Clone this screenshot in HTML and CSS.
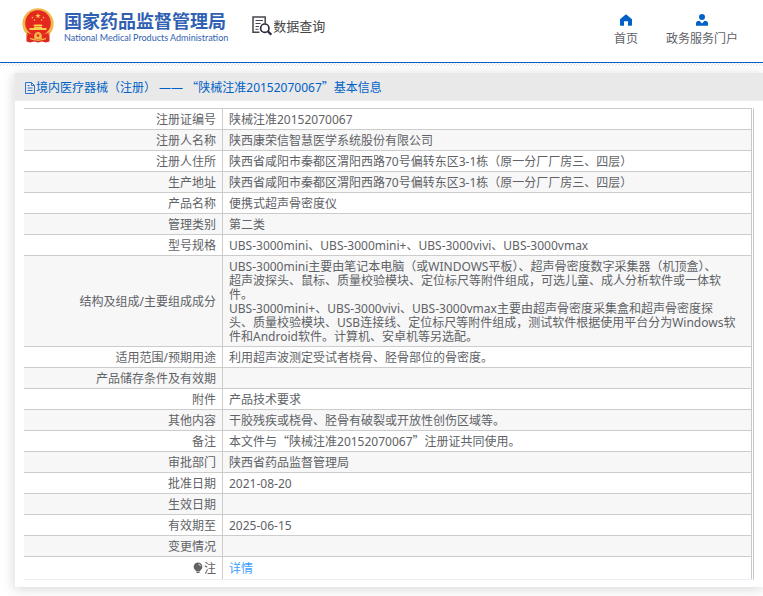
FILE: index.html
```html
<!DOCTYPE html>
<html lang="zh-CN">

<head>
    <meta charset="UTF-8">
    <meta name="viewport" content="width=device-width, initial-scale=1.0">
    <title>国家药品监督管理局 数据查询</title>
    <link rel="stylesheet" href="styles.css">
</head>

<body>
    <header class="header">
        <a class="logo" href="#">
            <svg class="emblem" viewBox="0 0 32 35" aria-hidden="true">
                <path d="M4.5 24 L4.5 33.5 L8 34.5 L12 33.5 L16 34.5 L20 33.5 L24 34.5 L27.5 33.5 L27.5 24 Z" fill="#dd2a20" />
                <circle cx="16" cy="15.8" r="15.6" fill="#f0b84c" />
                <circle cx="16" cy="15" r="12.8" fill="#e5281e" />
                <path d="M16 5 L16.7 7 H18.8 L17.1 8.3 L17.7 10.3 L16 9.1 L14.3 10.3 L14.9 8.3 L13.2 7 H15.3 Z" fill="#f6cf4f" />
                <g fill="#f6cf4f">
                    <circle cx="10.5" cy="9.5" r="0.8" />
                    <circle cx="12.4" cy="12" r="0.8" />
                    <circle cx="19.6" cy="12" r="0.8" />
                    <circle cx="21.5" cy="9.5" r="0.8" />
                    <path d="M11 18 L12.5 16.6 H19.5 L21 18 Z M12 18.6 H20 V20 H24.5 V22 H7.5 V20 H12 Z" />
                </g>
                <path d="M5 24.5 Q10 27 12.5 26.5 L12 31 L6 29 Z M27 24.5 Q22 27 19.5 26.5 L20 31 L26 29 Z" fill="#e5281e" />
                <circle cx="16" cy="27.5" r="3.6" fill="#f0b84c" />
                <circle cx="16" cy="27.5" r="1.3" fill="#e5281e" />
                <path d="M8 30.5 Q16 34 24 30.5" fill="none" stroke="#f6cf4f" stroke-width="1.2" />
            </svg>
            <span class="logo-text">
                <span class="logo-cn">国家药品监督管理局</span>
                <span class="logo-en">National Medical Products Administration</span>
            </span>
        </a>
        <a class="search-title" href="#">
            <svg class="search-icon" viewBox="0 0 20 20" aria-hidden="true">
                <path d="M7.5 16.2 H1 V1 H13.2 V7.5" fill="none" stroke="#45454f" stroke-width="1.5" />
                <path d="M3.5 4.5 H11 M3.5 7.5 H8.5 M3.5 10.5 H7 M3.5 13.2 H6.5" stroke="#45454f" stroke-width="1.1" />
                <circle cx="12.8" cy="12.2" r="4.2" fill="none" stroke="#2b2b40" stroke-width="1.7" />
                <path d="M15.8 15.2 L19.3 18.6" stroke="#2b2b40" stroke-width="2.2" />
            </svg>
            <span>数据查询</span>
        </a>
        <nav class="nav">
            <a href="#">
                <svg class="nav-icon" viewBox="0 0 12 12" aria-hidden="true">
                    <path d="M6 0.3 L12 5.2 V11 Q12 11.7 11.3 11.7 H8 V7.2 H4 V11.7 H0.7 Q0 11.7 0 11 V5.2 Z" fill="#0061c6" />
                </svg>
                <span>首页</span>
            </a>
            <a href="#">
                <svg class="nav-icon" viewBox="0 0 12 12" aria-hidden="true">
                    <circle cx="6" cy="3" r="3" fill="#0061c6" />
                    <path d="M0 11.8 V9.5 Q0 6.8 3.5 6.8 L6 9.5 L8.5 6.8 Q12 6.8 12 9.5 V11.8 Z" fill="#0061c6" />
                </svg>
                <span>政务服务门户</span>
            </a>
        </nav>
    </header>
    <div class="stripe"></div>

    <main class="card">
        <h1 class="card-header">
            <svg class="doc-icon" viewBox="0 0 12 12" aria-hidden="true">
                <path d="M1.5 0.5 H7.5 L10.5 3.5 V11.5 H1.5 Z M7.5 0.5 V3.5 H10.5 M3.5 3.5 H5.5 M3.5 6 H8.5 M3.5 8.5 H8.5" fill="none" stroke="#2f74cc" />
            </svg>
            <span>境内医疗器械（注册） —— <span class="quote">“</span>陕械注准20152070067<span class="quote">”</span>基本信息</span>
        </h1>
        <div class="card-body">
            <table class="info">
                <tbody>
                    <tr><th scope="row">注册证编号</th><td>陕械注准20152070067</td></tr>
                    <tr><th scope="row">注册人名称</th><td>陕西康荣信智慧医学系统股份有限公司</td></tr>
                    <tr><th scope="row">注册人住所</th><td>陕西省咸阳市秦都区渭阳西路70号偏转东区3-1栋（原一分厂厂房三、四层）</td></tr>
                    <tr><th scope="row">生产地址</th><td>陕西省咸阳市秦都区渭阳西路70号偏转东区3-1栋（原一分厂厂房三、四层）</td></tr>
                    <tr><th scope="row">产品名称</th><td>便携式超声骨密度仪</td></tr>
                    <tr><th scope="row">管理类别</th><td>第二类</td></tr>
                    <tr><th scope="row">型号规格</th><td>UBS-3000mini、UBS-3000mini+、UBS-3000vivi、UBS-3000vmax</td></tr>
                    <tr>
                        <th scope="row">结构及组成/主要组成成分</th>
                        <td>
                            UBS-3000mini主要由笔记本电脑（或WINDOWS平板）、超声骨密度数字采集器（机顶盒）、<br>
                            超声波探头、鼠标、质量校验模块、定位标尺等附件组成，可选儿童、成人分析软件或一体软<br>
                            件。<br>
                            UBS-3000mini+、UBS-3000vivi、UBS-3000vmax主要由超声骨密度采集盒和超声骨密度探<br>
                            头、质量校验模块、USB连接线、定位标尺等附件组成，测试软件根据使用平台分为Windows软<br>
                            件和Android软件。计算机、安卓机等另选配。
                        </td>
                    </tr>
                    <tr><th scope="row">适用范围/预期用途</th><td>利用超声波测定受试者桡骨、胫骨部位的骨密度。</td></tr>
                    <tr><th scope="row">产品储存条件及有效期</th><td></td></tr>
                    <tr><th scope="row">附件</th><td>产品技术要求</td></tr>
                    <tr><th scope="row">其他内容</th><td>干胶残疾或桡骨、胫骨有破裂或开放性创伤区域等。</td></tr>
                    <tr><th scope="row">备注</th><td>本文件与<span class="quote">“</span>陕械注准20152070067<span class="quote">”</span>注册证共同使用。</td></tr>
                    <tr><th scope="row">审批部门</th><td>陕西省药品监督管理局</td></tr>
                    <tr><th scope="row">批准日期</th><td>2021-08-20</td></tr>
                    <tr><th scope="row">生效日期</th><td></td></tr>
                    <tr><th scope="row">有效期至</th><td>2025-06-15</td></tr>
                    <tr><th scope="row">变更情况</th><td></td></tr>
                    <tr class="note">
                        <th scope="row">
                            <svg class="bulb-icon" viewBox="0 0 10 12" aria-hidden="true">
                                <path d="M5 0.5 A4.3 4.3 0 0 1 7.5 8.3 L6.8 9.5 H3.2 L2.5 8.3 A4.3 4.3 0 0 1 5 0.5 Z M3.5 10 H6.5 V11 H3.5 Z" fill="#606266" />
                                <path d="M5.5 2.2 Q7.3 2.5 7.6 4.3" fill="none" stroke="#fff" stroke-width="0.8" />
                            </svg>注
                        </th>
                        <td><a class="detail" href="#">详情</a></td>
                    </tr>
                </tbody>
            </table>
        </div>
    </main>
</body>

</html>
```
FILE: styles.css
```css
body {
    margin: 0;
    background-color: #fff;
    color: #606266;
    font-family: "Noto Sans", "Noto Sans CJK SC", sans-serif;
    font-size: 12px;
    line-height: 14px;
}

a {
    color: inherit;
    text-decoration: none;
}

svg {
    flex: none;
}

.header {
    display: flex;
    align-items: flex-start;
    box-sizing: border-box;
    height: 63px;
    padding: 8px 25px 0 22px;
    border-bottom: 1px solid #0061c6;
}

.logo {
    display: flex;
    gap: 10px;
}

.emblem {
    width: 32px;
    height: 35px;
}

.logo-text {
    display: flex;
    flex-direction: column;
    padding-top: 3px;
    color: #305fb3;
    white-space: nowrap;
}

.logo-cn {
    font-size: 18px;
    font-weight: bold;
    line-height: 20px;
}

.logo-en {
    font-family: Lato, sans-serif;
    font-size: 9px;
    line-height: 14px;
}

.search-title {
    display: flex;
    align-items: center;
    gap: 1px;
    margin-left: 24px;
    padding-top: 8px;
    color: #444;
    font-size: 13px;
    line-height: 20px;
}

.search-icon {
    width: 20px;
    height: 20px;
}

.nav {
    display: flex;
    gap: 28px;
    margin-left: auto;
    padding-top: 6px;
}

.nav a {
    display: flex;
    flex-direction: column;
    align-items: center;
    gap: 6px;
}

.nav-icon {
    width: 12px;
    height: 12px;
}

/* fine hatching under the header line */
.stripe {
    height: 3px;
    background: linear-gradient(135deg, #fff 40%, #e0e0e0 40%, #e0e0e0 60%, #fff 60%) 0 0 / 3px 3px;
}

.card {
    margin: 7px 0 9px 14px;
    border-left: 1px solid #ebeef5;
    box-shadow: 0 2px 12px rgba(0, 0, 0, 0.16);
}

.card-header {
    display: flex;
    align-items: center;
    margin: 0;
    padding: 8px 9px 5px;
    border-bottom: 1px solid #ebeef5;
    background-color: #e9e9e9;
    color: #0061c6;
    font-size: 12px;
    font-weight: normal;
    line-height: 14px;
}

.doc-icon {
    width: 12px;
    height: 12px;
}

/* full-width Chinese quotation marks */
.quote {
    font-family: "Noto Sans CJK SC", sans-serif;
    line-height: 0;
}

.card-body {
    padding: 7px 9px;
}

.info {
    width: 100%;
    padding-right: 1px;
    border-right: 1px solid #c8c8cf;
    border-bottom: 1px solid #ebeef5;
    border-spacing: 0;
}

.info th,
.info td {
    height: 14px;
    padding: 4px 6px 2px;
    border-top: 1px solid #ccc;
    font-weight: normal;
}

.info th {
    width: 186px;
    text-align: right;
}

.info td {
    border-right: 1px solid #c8c8cf;
    border-left: 1px solid #ccc;
}

.info tr:nth-child(even) {
    background-color: #f7f7f7;
}

.info .note th,
.info .note td {
    padding: 5px 6px 3px;
}

.bulb-icon {
    width: 10px;
    height: 12px;
    margin-right: 1px;
    vertical-align: -1px;
}

.detail {
    color: #409eff;
}
```
